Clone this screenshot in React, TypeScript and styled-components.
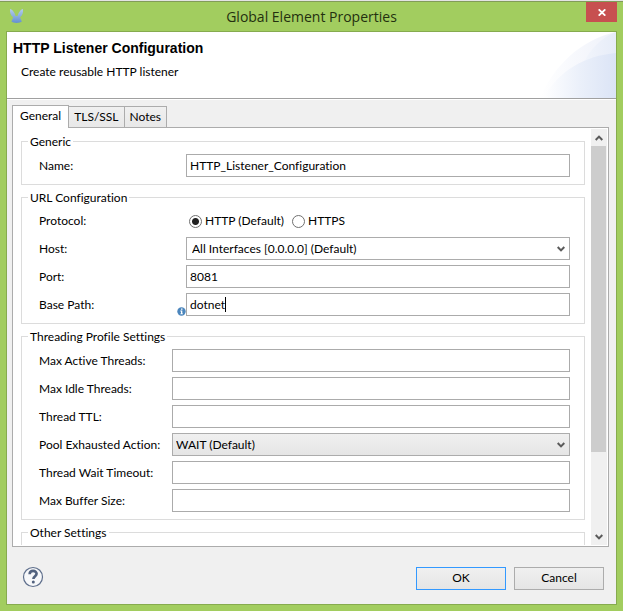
import React from 'react';
import styled, { createGlobalStyle, css } from 'styled-components';

const GlobalStyle = createGlobalStyle`
  * { box-sizing: border-box; }
  html, body { margin: 0; }
  body, button, input, select {
    font-family: Lato, "Open Sans", sans-serif;
    font-size: 12px;
    font-variant-ligatures: none;
    line-height: 16px;
    color: #000;
  }
`;

const Window = styled.main`
  display: flex;
  flex-direction: column;
  height: 100vh;
  min-height: 400px;
  padding: 0 6px 6px;
  background: #a2cd5f;
  border-top: 1px solid #e4e4e4;
  overflow: hidden;
`;

const TitleBar = styled.header`
  display: grid;
  grid-template-columns: 48px 1fr 48px;
  flex: none;
  height: 30px;
  margin: 0 -6px;
  border-top: 1px solid #829c58;
`;

const AppIcon = styled.svg`
  width: 16px;
  height: 16px;
  margin: 7px 0 0 9px;
`;

const Title = styled.h1`
  margin: 0;
  padding-top: 5px;
  font-family: "Open Sans", sans-serif;
  font-size: 14px;
  font-weight: 400;
  line-height: 20px;
  text-align: center;
  white-space: nowrap;
  color: #24300f;
`;

const CloseButton = styled.button`
  display: flex;
  align-items: center;
  justify-content: center;
  width: 31px;
  height: 20px;
  margin-left: 11px;
  padding: 0;
  border: 0;
  background: #c75050;
`;

const Frame = styled.div`
  display: flex;
  flex: 1;
  flex-direction: column;
  min-height: 0;
  border: 1px solid #86ab4e;
  background: #f0f0f0;
`;

const Banner = styled.section`
  position: relative;
  flex: none;
  height: 67px;
  padding: 7px 6px;
  background: #fff;
  border-bottom: 1px solid #a0a0a0;
`;

const BannerArt = styled.svg`
  position: absolute;
  top: 0;
  right: 0;
  width: 76px;
  height: 66px;
`;

const Heading = styled.h2`
  margin: 0;
  font-family: "Liberation Sans", Arial, sans-serif;
  font-size: 14px;
  font-weight: 700;
  line-height: 18px;
`;

const Lead = styled.p`
  margin: 7px 0 0 8px;
`;

const Body = styled.div`
  display: flex;
  flex: 1;
  flex-direction: column;
  min-height: 0;
  padding: 5px 7px 0 5px;
  border-top: 1px solid #fff;
`;

const Tabs = styled.div`
  display: flex;
  flex: none;
  align-items: flex-end;
`;

const Tab = styled.button<{ $active?: boolean }>`
  height: 21px;
  margin: 0 0 0 -1px;
  padding: 0 5px;
  border: 1px solid #acacac;
  border-bottom: 0;
  background: linear-gradient(#f0f0f0, #e8e8e8);
  white-space: nowrap;
  ${(p) =>
    p.$active &&
    css`
      position: relative;
      z-index: 1;
      height: 23px;
      margin: 0 0 -1px;
      padding: 0 7px 2px;
      background: #fff;
    `}
`;

const Panel = styled.div`
  display: flex;
  flex: 1;
  min-height: 0;
  padding: 1px;
  border: 1px solid #acacac;
  background: #fff;
`;

const ScrollArea = styled.div`
  flex: 1;
  min-width: 0;
  overflow: hidden;
  padding: 5px 6px 0 7px;
`;

const ScrollBar = styled.div`
  display: flex;
  flex: none;
  flex-direction: column;
  width: 16px;
  background: #f0f0f0;
`;

const ScrollButton = styled.button`
  display: flex;
  align-items: center;
  justify-content: center;
  flex: none;
  width: 15px;
  height: 17px;
  padding: 0;
  border: 0;
  background: none;
`;

const ScrollTrack = styled.div`
  flex: 1;
`;

const ScrollThumb = styled.div`
  width: 15px;
  height: 80%;
  background: #cdcdcd;
`;

const Group = styled.fieldset<{ $labelWidth: number }>`
  --label-width: ${(p) => p.$labelWidth}px;
  display: flex;
  flex-direction: column;
  gap: 5px;
  min-width: 0;
  margin: 0 0 5px;
  padding: 5px 14px 7px 17px;
  border: 1px solid #dcdcdc;
`;

const Legend = styled.legend`
  margin-left: -11px;
  padding: 0 2px;
  line-height: 15px;
`;

const Row = styled.div`
  display: grid;
  grid-template-columns: var(--label-width) 1fr;
  min-height: 22px;
`;

const LabelCell = styled.div`
  display: flex;
  align-items: center;
  justify-content: space-between;
  white-space: nowrap;
`;

const InfoIcon = styled.svg`
  align-self: flex-end;
  width: 9px;
  height: 9px;
`;

const Control = styled.div`
  position: relative;
  display: flex;
  align-items: center;
`;

const TextInput = styled.input`
  width: 100%;
  height: 23px;
  padding: 0 3px;
  border: 1px solid #ababab;
  border-radius: 0;
  background: #fff;
  outline: 0;
`;

const Caret = styled.span`
  position: absolute;
  top: 4px;
  left: 39px;
  width: 1px;
  height: 15px;
  background: #000;
`;

const Select = styled.select<{ $shaded?: boolean }>`
  width: 100%;
  height: 23px;
  padding: 0 20px 0 ${(p) => (p.$shaded ? 3 : 5)}px;
  border: 1px solid #acacac;
  border-radius: 0;
  outline: 0;
  appearance: none;
  background: ${(p) => (p.$shaded ? 'linear-gradient(#f0f0f0, #e5e5e5)' : '#fff')};
`;

const SelectArrow = styled.span`
  position: absolute;
  top: 9px;
  right: 5px;
  display: flex;
  pointer-events: none;
`;

const RadioLabel = styled.label`
  display: flex;
  align-items: center;
  gap: 3px;
  margin: 0 5px 0 3px;
  white-space: nowrap;
`;

const Radio = styled.input`
  width: 13px;
  height: 13px;
  margin: 0;
  border: 1px solid #707070;
  border-radius: 50%;
  appearance: none;
  background: #fff;
  &:checked {
    background: radial-gradient(circle, #222 0 3px, #fff 4px);
  }
`;

const Footer = styled.footer`
  display: flex;
  flex: none;
  align-items: center;
  gap: 8px;
  height: 57px;
  padding: 5px 12px 0 15px;
`;

const HelpButton = styled.button`
  display: flex;
  margin: 0 auto 2px 0;
  padding: 0;
  border: 0;
  background: none;
`;

const Button = styled.button<{ $primary?: boolean }>`
  width: 90px;
  height: 23px;
  padding: 0;
  border: 1px solid ${(p) => (p.$primary ? '#3399ff' : '#acacac')};
  background: linear-gradient(#f0f0f0, #e5e5e5);
`;

const Chevron = ({ up }: { up?: boolean }) => (
  <svg width="8" height="6" viewBox="0 0 8 6" aria-hidden="true">
    <path
      d={up ? 'M.7 5 4 1.6 7.3 5' : 'M.7 1 4 4.4 7.3 1'}
      fill="none"
      stroke="#5a5a5a"
      strokeWidth="2"
    />
  </svg>
);

const Field = ({ id, label, value = '' }: { id: string; label: string; value?: string }) => (
  <Row>
    <LabelCell>
      <label htmlFor={id}>{label}</label>
    </LabelCell>
    <Control>
      <TextInput id={id} type="text" defaultValue={value} />
    </Control>
  </Row>
);

const SelectField = ({
  id,
  label,
  option,
  shaded,
}: {
  id: string;
  label: string;
  option: string;
  shaded?: boolean;
}) => (
  <Row>
    <LabelCell>
      <label htmlFor={id}>{label}</label>
    </LabelCell>
    <Control>
      <Select id={id} $shaded={shaded}>
        <option>{option}</option>
      </Select>
      <SelectArrow>
        <Chevron />
      </SelectArrow>
    </Control>
  </Row>
);

export default function App() {
  return (
    <Window>
      <GlobalStyle />
      <TitleBar>
        <AppIcon viewBox="0 0 16 16" aria-hidden="true">
          <defs>
            <linearGradient id="mule" x2="0" y2="1">
              <stop offset="0" stopColor="#b4cdea" />
              <stop offset="1" stopColor="#6490d2" />
            </linearGradient>
          </defs>
          <path
            d="M1 0C3.500.5 5.800 3.500 6.600 7h2C9.400 3.500 11.500.5 14 0c.4 3.500-.5 6.500-3 8.300l1.800 4.200c-1.400 1.900-9 1.900-10.400 0l1.800-4.200C1.600 6.500.7 3.500 1 0Z"
            fill="url(#mule)"
          />
        </AppIcon>
        <Title>Global Element Properties</Title>
        <CloseButton type="button" aria-label="Close">
          <svg width="8" height="7" viewBox="0 0 8 7" aria-hidden="true">
            <path d="M.7.3 7.3 6.7M7.3.3.7 6.7" stroke="#fff" strokeWidth="1.8" />
          </svg>
        </CloseButton>
      </TitleBar>
      <Frame>
        <Banner>
          <BannerArt viewBox="0 0 76 66" aria-hidden="true">
            <defs>
              <linearGradient id="outer">
                <stop offset="0" stopColor="#fff" />
                <stop offset="1" stopColor="#eef1fa" />
              </linearGradient>
              <linearGradient id="middle">
                <stop offset="0" stopColor="#f6f8fd" />
                <stop offset="1" stopColor="#e6ecf8" />
              </linearGradient>
              <linearGradient id="inner">
                <stop offset="0" stopColor="#fff" />
                <stop offset=".5" stopColor="#ebf0fa" />
                <stop offset="1" stopColor="#dbe4f6" />
              </linearGradient>
            </defs>
            <path d="M0 66C14 34 40 8 76 0v66Z" fill="url(#outer)" />
            <path d="M32 66C38 36 50 10 76 0v66Z" fill="url(#middle)" />
            <path d="M3 66C20 38 44 24 76 21v45Z" fill="url(#inner)" />
          </BannerArt>
          <Heading>HTTP Listener Configuration</Heading>
          <Lead>Create reusable HTTP listener</Lead>
        </Banner>
        <Body>
          <Tabs role="tablist">
            <Tab type="button" role="tab" aria-selected="true" $active>
              General
            </Tab>
            <Tab type="button" role="tab" aria-selected="false">
              TLS/SSL
            </Tab>
            <Tab type="button" role="tab" aria-selected="false">
              Notes
            </Tab>
          </Tabs>
          <Panel role="tabpanel">
            <ScrollArea>
              <Group $labelWidth={147}>
                <Legend>Generic</Legend>
                <Field id="name" label="Name:" value="HTTP_Listener_Configuration" />
              </Group>
              <Group $labelWidth={147}>
                <Legend>URL Configuration</Legend>
                <Row role="radiogroup" aria-labelledby="protocol">
                  <LabelCell id="protocol">Protocol:</LabelCell>
                  <Control>
                    <RadioLabel>
                      <Radio type="radio" name="protocol" defaultChecked />
                      HTTP (Default)
                    </RadioLabel>
                    <RadioLabel>
                      <Radio type="radio" name="protocol" />
                      HTTPS
                    </RadioLabel>
                  </Control>
                </Row>
                <SelectField id="host" label="Host:" option="All Interfaces [0.0.0.0] (Default)" />
                <Field id="port" label="Port:" value="8081" />
                <Row>
                  <LabelCell>
                    <label htmlFor="path">Base Path:</label>
                    <InfoIcon viewBox="0 0 9 9" aria-hidden="true">
                      <circle cx="4.5" cy="4.5" r="4.2" fill="#4b86bd" />
                      <path d="M4 1.500h1.500v1.200H4zM3.300 3.600h2v2.800h.7v.8H3.300v-.8H4v-2h-.7z" fill="#fff" />
                    </InfoIcon>
                  </LabelCell>
                  <Control>
                    <TextInput id="path" type="text" defaultValue="dotnet" />
                    <Caret />
                  </Control>
                </Row>
              </Group>
              <Group $labelWidth={133}>
                <Legend>Threading Profile Settings</Legend>
                <Field id="max-active" label="Max Active Threads:" />
                <Field id="max-idle" label="Max Idle Threads:" />
                <Field id="ttl" label="Thread TTL:" />
                <SelectField id="pool" label="Pool Exhausted Action:" option="WAIT (Default)" shaded />
                <Field id="timeout" label="Thread Wait Timeout:" />
                <Field id="buffer" label="Max Buffer Size:" />
              </Group>
              <Group $labelWidth={133}>
                <Legend>Other Settings</Legend>
                <Row />
              </Group>
            </ScrollArea>
            <ScrollBar>
              <ScrollButton type="button" aria-label="Scroll up">
                <Chevron up />
              </ScrollButton>
              <ScrollTrack>
                <ScrollThumb />
              </ScrollTrack>
              <ScrollButton type="button" aria-label="Scroll down">
                <Chevron />
              </ScrollButton>
            </ScrollBar>
          </Panel>
        </Body>
        <Footer>
          <HelpButton type="button" aria-label="Help">
            <svg width="22" height="22" viewBox="0 0 22 22" aria-hidden="true">
              <circle cx="11" cy="11" r="9.5" fill="#f7f8fa" stroke="#5f6f8c" strokeWidth="1.2" />
              <path
                d="M7.600 8.200C7.700 6 9.100 4.900 11.100 4.900s3.500 1.100 3.500 2.900c0 2.300-3.200 2.600-3.200 5.200"
                fill="none"
                stroke="#52627f"
                strokeWidth="2.6"
              />
              <circle cx="11.3" cy="16" r="1.5" fill="#52627f" />
            </svg>
          </HelpButton>
          <Button type="button" $primary>
            OK
          </Button>
          <Button type="button">Cancel</Button>
        </Footer>
      </Frame>
    </Window>
  );
}
